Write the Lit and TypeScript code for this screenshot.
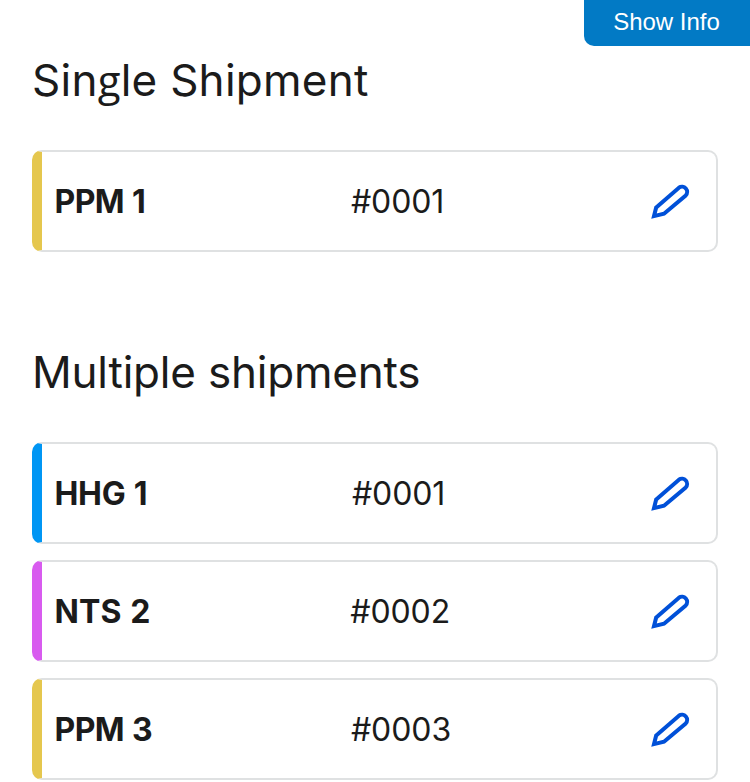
import { LitElement, html, css } from "lit";
import { customElement, property } from "lit/decorators.js";

@customElement("shipment-row")
class ShipmentRow extends LitElement {
  @property() kind = "";
  @property() label = "";
  @property() code = "";

  static styles = css`
    :host { display: block; }
    .row {
      box-sizing: border-box;
      height: 102px;
      display: flex;
      justify-content: space-between;
      align-items: center;
      padding: 1px 22px 0 12.5px;
      border: 2px solid #dfe1e2;
      border-left-width: 10px;
      border-radius: 10px;
      font-size: 32px;
      line-height: 40px;
    }
    .ppm { border-left-color: #e5c74e; }
    .hhg { border-left-color: #0096f4; }
    .nts { border-left-color: #d85bef; }
    .name { font-weight: 700; letter-spacing: -0.6px; word-spacing: 1px; }
    .nts .name { letter-spacing: 0.1px; }
    .hhg .name { letter-spacing: -0.3px; }
    .code { letter-spacing: -0.1px; margin-left: 4px; }
    .icon { display: block; }
  `;

  render() {
    return html`<div class="row ${this.kind}">
      <span class="name">${this.label}</span>
      <span class="code">${this.code}</span>
      <svg class="icon" width="48" height="48" viewBox="0 0 48 48" fill="none" stroke="#0050d8" stroke-width="4">
        <path d="M10.2 29.4L32.9 9.7A5.2 5.2 0 0 1 39.7 17.5L18 35.7L8 38.1Z" />
      </svg>
    </div>`;
  }
}

@customElement("app-root")
class AppRoot extends LitElement {
  static styles = css`
    :host {
      display: block;
      position: relative;
      height: 782px;
      overflow: hidden;
      background: #fff;
      color: #1b1b1b;
      font-family: Inter, "Liberation Sans", sans-serif;
    }
    .info {
      position: absolute;
      top: 0;
      right: 0;
      width: 166px;
      height: 46px;
      padding: 0 1px 2px 0;
      border: 0;
      border-radius: 0 0 0 10px;
      background: #027ac5;
      color: #fff;
      font: 24px "Liberation Sans", sans-serif;
    }
    .content { padding: 50px 32px 0; }
    .title { margin: 0 0 40px; font-weight: 400; font-size: 44px; line-height: 60px; }
    .single { letter-spacing: 0.25px; }
    .multiple { letter-spacing: -0.2px; }
    .g { font-family: "Open Sans", sans-serif; font-size: 42px; line-height: 1; }
    .group { display: grid; gap: 16px; margin-bottom: 90px; }
  `;

  render() {
    return html`
      <main class="content">
        <h1 class="title single">Sin<span class="g">g</span>le Shipment</h1>
        <div class="group">
          <shipment-row kind="ppm" label="PPM 1" code="#0001"></shipment-row>
        </div>
        <h1 class="title multiple">Multiple shipments</h1>
        <div class="group">
          <shipment-row kind="hhg" label="HHG 1" code="#0001"></shipment-row>
          <shipment-row kind="nts" label="NTS 2" code="#0002"></shipment-row>
          <shipment-row kind="ppm" label="PPM 3" code="#0003"></shipment-row>
        </div>
      </main>
      <button class="info">Show Info</button>
    `;
  }
}
